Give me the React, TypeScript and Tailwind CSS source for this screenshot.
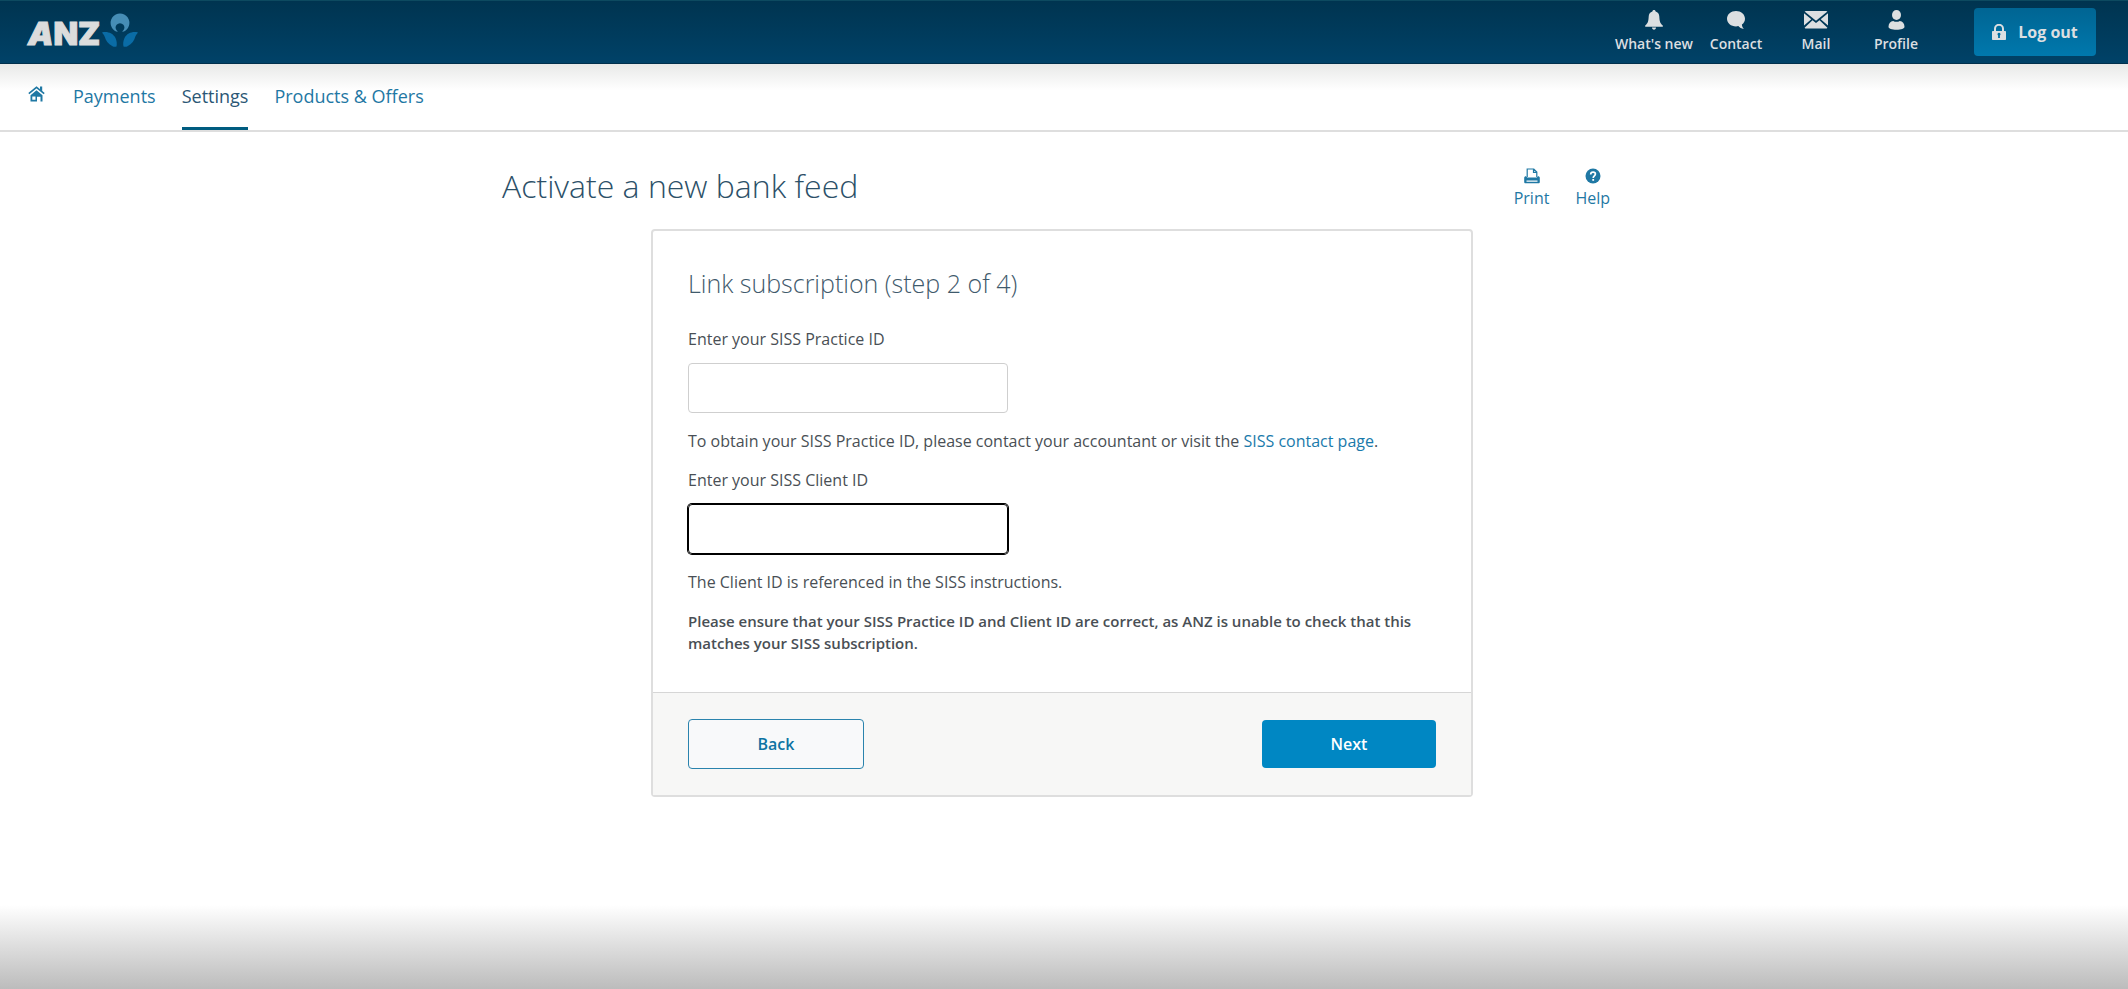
import type { ReactNode } from "react";

type IconProps = { className?: string };

function HomeIcon({ className }: IconProps) {
  return (
    <svg viewBox="0 0 17 16" className={className} fill="currentColor" aria-hidden="true">
      <path d="M12 0.500h2.200v5l-2.200-1.800z" />
      <path d="M0.800 7.600L8.500 1.300l7.700 6.300" fill="none" stroke="currentColor" strokeWidth="1.600" />
      <path fillRule="evenodd" d="M8.500 4.300l6 4.900v6.300h-2v-4.800H9v4.800H2.500V9.200zM4.300 10.600v3.200h3.200v-3.200z" />
    </svg>
  );
}

function BellIcon({ className }: IconProps) {
  return (
    <svg viewBox="0 0 18 20" className={className} fill="currentColor" aria-hidden="true">
      <path d="M9 0c.9 0 1.500.6 1.600 1.400 2.300.7 3.600 2.600 3.700 5 .2 4.600.8 6.800 3.500 9v1.300H.2v-1.300c2.700-2.200 3.300-4.400 3.500-9 .1-2.400 1.400-4.300 3.700-5C7.500.6 8.100 0 9 0z" />
      <path d="M7 17.600h4c0 1.300-.9 2.100-2 2.100s-2-.8-2-2.100z" />
    </svg>
  );
}

function ContactIcon({ className }: IconProps) {
  return (
    <svg viewBox="0 0 18 18" className={className} fill="currentColor" aria-hidden="true">
      <path d="M9 0c5 0 9 3.400 9 7.700 0 2.400-1.200 4.500-3.100 5.900.1 1.700.8 3.200 2 4.400-2.500-.3-4.400-1.300-5.600-2.900-.7.200-1.500.300-2.300.300-5 0-9-3.400-9-7.700S4 0 9 0z" />
    </svg>
  );
}

function MailIcon({ className }: IconProps) {
  return (
    <svg viewBox="0 0 24 18" className={className} fill="currentColor" aria-hidden="true">
      <path d="M2 0h20c.6 0 1 .2 1.400.5L12 9.800.6.500C1 .2 1.400 0 2 0z" />
      <path d="M0 2.200l7.300 6L0 14.500zM24 2.200v12.300l-7.300-6.300z" />
      <path d="M8.500 9.300l3.500 2.800 3.500-2.800 7.900 7.400c-.4.600-.9.900-1.600.9H2.200c-.7 0-1.200-.3-1.600-.9z" />
    </svg>
  );
}

function ProfileIcon({ className }: IconProps) {
  return (
    <svg viewBox="0 0 17 20" className={className} fill="currentColor" aria-hidden="true">
      <ellipse cx="8.500" cy="5" rx="4.500" ry="5" />
      <path d="M.5 16.800c0-3.500 2-5.500 4.700-5.900 1 .6 2.100.9 3.300.9s2.300-.3 3.300-.9c2.700.4 4.700 2.400 4.700 5.900 0 1.900-3.400 3-8 3s-8-1.100-8-3z" />
    </svg>
  );
}

function LockIcon({ className }: IconProps) {
  return (
    <svg viewBox="0 0 14 16" className={className} aria-hidden="true">
      <path d="M3 8V4.800a4 4 0 018 0V8" fill="none" stroke="currentColor" strokeWidth="2" />
      <path
        fill="currentColor"
        fillRule="evenodd"
        d="M1 7h12c.6 0 1 .4 1 1v7c0 .6-.4 1-1 1H1c-.6 0-1-.4-1-1V8c0-.6.4-1 1-1zm6 1.800a1.500 1.500 0 00-.9 2.700V14h1.800v-2.500A1.500 1.500 0 007 8.800z"
      />
    </svg>
  );
}

function PrintIcon({ className }: IconProps) {
  return (
    <svg viewBox="0 0 16 16" className={className} aria-hidden="true">
      <path d="M3.200 9V1h6.600l3 3v5M9.500 1v3.300h3.300" fill="none" stroke="currentColor" strokeWidth="1.200" />
      <path fill="currentColor" fillRule="evenodd" d="M2 8.200l1.200 1.300h9.600L14 8.200c1.100 0 1.800.6 1.800 1.600V14c0 .8-.5 1.300-1.300 1.300h-13C.7 15.300.2 14.800.2 14V9.800C.2 8.800.9 8.200 2 8.200zM2.500 12.500v1.200h11v-1.200z" />
    </svg>
  );
}

function HelpIcon({ className }: IconProps) {
  return (
    <svg viewBox="0 0 16 16" className={className} aria-hidden="true">
      <circle cx="8" cy="8" r="7.500" fill="currentColor" />
      <path d="M5.700 6.400c0-1.500 1-2.300 2.400-2.300s2.300.8 2.300 2c0 1.800-2.200 1.900-2.200 4" fill="none" stroke="#fff" strokeWidth="1.700" />
      <rect x="7.300" y="11" width="1.800" height="1.800" fill="#fff" />
    </svg>
  );
}

function Lotus({ className }: IconProps) {
  return (
    <svg viewBox="0 0 36 34" className={className} aria-hidden="true">
      <path fill="#468db5" d="M15 18.700A9.400 9.400 0 1121 18.700L20.200 18.400A4.400 4.400 0 1015.800 18.400z" />
      <path fill="#0a6ca6" d="M0 19.500C5 18 11 20 13.500 25c1.300 2.800 1.600 6 1 8.500-1.300.5-2.800.5-4-.2C6 31 3.500 27 3 24.500 2.300 22.500 1.300 21 0 19.500z" />
      <path fill="#0a6ca6" d="M36 19.500C31 18 25 20 22.500 25c-1.300 2.800-1.600 6-1 8.500 1.300.5 2.800.5 4-.2C30 31 32.500 27 33 24.500c.7-2 1.700-3.500 3-5z" />
    </svg>
  );
}

function HeaderLink({ icon, label, className }: { icon: ReactNode; label: string; className: string }) {
  return (
    <a href="#" className={`flex flex-col items-center gap-1 ${className}`}>
      <span className="flex h-5 items-center">{icon}</span>
      <span className="text-sm leading-5 font-semibold whitespace-nowrap">{label}</span>
    </a>
  );
}

const inputClass = "block h-[50px] w-80 max-w-full rounded border px-3 text-base outline-none";

export default function App() {
  return (
    <div className="flex min-h-screen flex-col bg-white font-['Open_Sans','Noto_Sans',sans-serif] text-[#494f55]">
      <header className="flex h-16 items-center border-y border-t-[#0d4a60] border-b-[#00304c] bg-linear-to-b from-[#003450] to-[#004268] pr-8 pl-7 text-[#dcdfe1]">
        <a href="#" aria-label="ANZ home" className="flex items-center gap-0.5">
          <span className="pt-1 font-['Inter',sans-serif] text-[32px] leading-10 font-black text-[#dcdcdc] [-webkit-text-stroke:1px_#dcdcdc]">
            <i>A</i>NZ
          </span>
          <Lotus className="mb-1 h-[34px] w-9 shrink-0" />
        </a>
        <div className="ml-auto flex">
          <HeaderLink className="w-[84px]" label="What's new" icon={<BellIcon className="h-5 w-[18px]" />} />
          <HeaderLink className="w-20" label="Contact" icon={<ContactIcon className="h-[18px] w-[18px]" />} />
          <HeaderLink className="w-20" label="Mail" icon={<MailIcon className="h-[18px] w-6" />} />
          <HeaderLink className="w-20" label="Profile" icon={<ProfileIcon className="h-5 w-[17px]" />} />
        </div>
        <button className="ml-[38px] flex h-12 w-[122px] items-center justify-center gap-3 rounded-sm bg-linear-to-b from-[#006593] to-[#0078ad] text-base font-bold">
          <LockIcon className="h-4 w-[14px]" />
          Log out
        </button>
      </header>

      <nav className="flex h-[68px] items-stretch gap-[26px] border-b-2 border-[#dedede] bg-linear-to-b from-[#e8e9e8] to-white to-40% px-7 text-lg text-[#1f78a4]">
        <a href="#" aria-label="Home" className="mr-0.5 pt-[22px]">
          <HomeIcon className="h-4 w-[17px]" />
        </a>
        <a href="#" className="pt-[18px]">Payments</a>
        <a href="#" aria-current="page" className="border-b-3 border-[#005c80] pt-[18px] text-[#2b5775]">Settings</a>
        <a href="#" className="pt-[18px]">Products &amp; Offers</a>
      </nav>

      <main className="w-full pr-1">
        <div className="mx-auto max-w-[1120px]">
          <div className="flex items-start justify-between pt-8 pr-3">
            <h1 className="text-[32px] leading-[44px] font-light text-[#2c5068]">Activate a new bank feed</h1>
            <div className="flex gap-[26px] pt-1 text-base text-[#1f78a4]">
              <button className="flex flex-col items-center gap-0.5">
                <PrintIcon className="h-4 w-4" />
                <span className="leading-6">Print</span>
              </button>
              <button className="flex flex-col items-center gap-0.5">
                <HelpIcon className="h-4 w-4" />
                <span className="leading-6">Help</span>
              </button>
            </div>
          </div>

          <form className="mx-auto mt-[19px] max-w-[822px] rounded-sm border-2 border-[#dedede]">
            <div className="px-[35px] pt-8 pb-[38px]">
              <h2 className="text-[25px] leading-10 font-light text-[#3f5a6c]">Link subscription (step 2 of 4)</h2>
              <label htmlFor="practice-id" className="mt-6 mb-3 block text-base">Enter your SISS Practice ID</label>
              <input id="practice-id" type="text" className={`${inputClass} border-[#cfcfcf]`} />
              <p className="mt-4 text-base">
                To obtain your SISS Practice ID, please contact your accountant or visit the{" "}
                <a href="#" className="text-[#1a7aab]">SISS contact page</a>.
              </p>
              <label htmlFor="client-id" className="mt-[15px] mb-3 block text-base">Enter your SISS Client ID</label>
              <input id="client-id" type="text" className={`${inputClass} border-black ring-1 ring-black`} />
              <p className="mt-4 text-base">The Client ID is referenced in the SISS instructions.</p>
              <p className="mt-4 text-[15px] leading-[22px] font-semibold">
                Please ensure that your SISS Practice ID and Client ID are correct, as ANZ is unable to check that this matches your SISS subscription.
              </p>
            </div>
            <div className="flex items-center justify-between border-t border-[#d6d6d6] bg-[#f7f7f6] px-[35px] py-[26px]">
              <button type="button" className="h-[50px] w-44 rounded-sm border border-[#2a83ad] bg-[#f8f9fa] text-base font-semibold text-[#0d73a3]">
                Back
              </button>
              <button type="submit" className="h-12 w-[174px] rounded-sm bg-[#0087c3] text-base font-semibold text-white">
                Next
              </button>
            </div>
          </form>
        </div>
      </main>

      <div className="mt-auto h-[84px] bg-linear-to-b from-white to-[#bcbcbc]" />
    </div>
  );
}
